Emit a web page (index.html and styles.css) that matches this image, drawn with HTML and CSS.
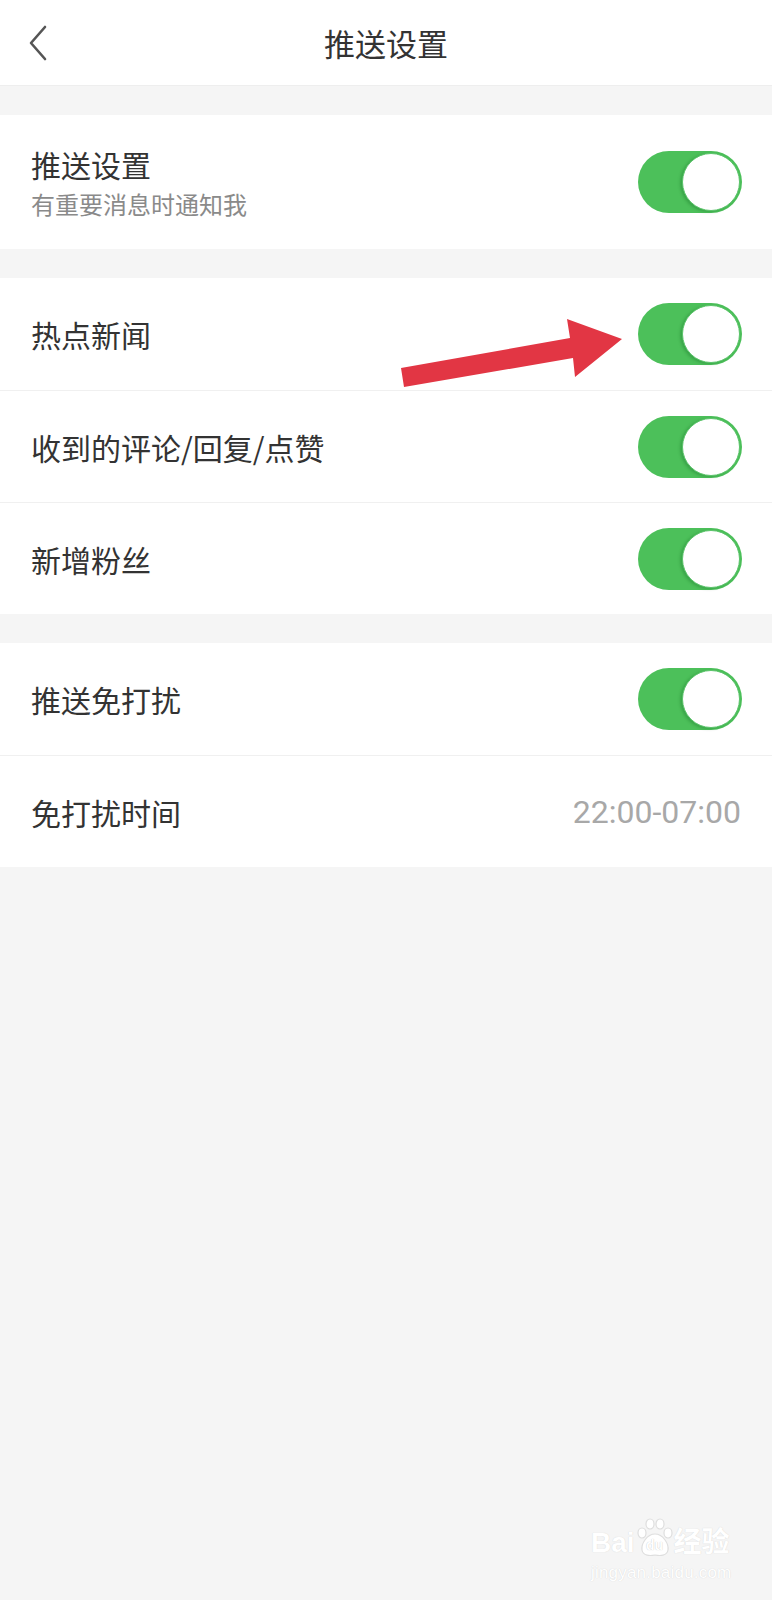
FILE: index.html
```html
<!DOCTYPE html>
<html>

<head>
    <meta name="viewport" content="width=device-width">
    <meta charset="utf-8">
    <title>推送设置</title>
    <link rel="stylesheet" href="styles.css">
</head>

<body>
    <div class="header">
        <svg class="back" width="22" height="36" viewBox="0 0 22 36">
            <path d="M18 2 L4 18 L18 34" fill="none" stroke="#555" stroke-width="2.6" stroke-linecap="round" stroke-linejoin="round"/>
        </svg>
        <h1>推送设置</h1>
    </div>

    <div class="section">
        <div class="row row-tall">
            <div class="label">
                <div class="title">推送设置</div>
                <div class="sub">有重要消息时通知我</div>
            </div>
            <div class="toggle"><span class="knob"></span></div>
        </div>
    </div>

    <div class="section">
        <div class="row">
            <div class="title">热点新闻</div>
            <div class="toggle"><span class="knob"></span></div>
        </div>
        <div class="row">
            <div class="title">收到的评论/回复/点赞</div>
            <div class="toggle"><span class="knob"></span></div>
        </div>
        <div class="row">
            <div class="title">新增粉丝</div>
            <div class="toggle"><span class="knob"></span></div>
        </div>
    </div>

    <div class="section">
        <div class="row">
            <div class="title">推送免打扰</div>
            <div class="toggle"><span class="knob"></span></div>
        </div>
        <div class="row">
            <div class="title">免打扰时间</div>
            <div class="value">22:00-07:00</div>
        </div>
    </div>

    <!-- red annotation arrow drawn over the screenshot -->
    <svg class="arrow" width="772" height="420" viewBox="0 0 772 420">
        <polygon points="401,368 570,338 567,319 622,339 575,377 573,358 404,387" fill="#e23644"/>
    </svg>

    <div class="watermark">
        <div class="wm-logo">
            <span>Bai</span>
            <span class="paw">
                <svg width="38" height="40" viewBox="0 0 38 40">
                    <g fill="#fff" stroke="#dedede" stroke-width="1.2">
                        <ellipse cx="6" cy="15" rx="4" ry="5"/>
                        <ellipse cx="14" cy="6" rx="4" ry="5"/>
                        <ellipse cx="24" cy="6" rx="4" ry="5"/>
                        <ellipse cx="32" cy="15" rx="4" ry="5"/>
                        <path d="M19 16 C11 16 5 26 6 32 C7 38 14 38 19 37 C24 38 31 38 32 32 C33 26 27 16 19 16 Z"/>
                    </g>
                </svg>
                <span class="paw-text">du</span>
            </span>
            <span>经验</span>
        </div>
        <div class="wm-url">jingyan.baidu.com</div>
    </div>
</body>

</html>
```

FILE: styles.css
```css
body {
    margin: 0;
    padding: 0;
    width: 772px;
    min-height: 1600px;
    background-color: #f5f5f5;
    font-family: "Noto Sans CJK SC", "Noto Sans", sans-serif;
    color: #333;
    position: relative;
}

.header {
    height: 86px;
    background-color: #fff;
    border-bottom: 1px solid #eee;
    box-sizing: border-box;
    display: flex;
    align-items: center;
    justify-content: center;
    position: relative;
}

.back {
    position: absolute;
    left: 27px;
    top: 25px;
}

h1 {
    margin: 0;
    font-size: 31px;
    font-weight: normal;
    color: #333;
    line-height: 40px;
}

.section {
    margin-top: 29px;
    background-color: #fff;
}

.row {
    height: 112px;
    box-sizing: border-box;
    padding: 0 30px 0 31px;
    display: flex;
    align-items: center;
    justify-content: space-between;
    border-top: 1px solid #f0f0f0;
}

.row:first-child {
    border-top: none;
}

.row-tall {
    height: 134px;
}

.label {
    display: flex;
    flex-direction: column;
}

.title {
    font-size: 30px;
    line-height: 36px;
    color: #333;
}

.sub {
    margin-top: 7px;
    font-size: 24px;
    line-height: 30px;
    color: #8a8a8a;
}

.value {
    font-family: Roboto, "Noto Sans", sans-serif;
    font-size: 32px;
    color: #a8a8a8;
    margin-right: 1px;
}

.toggle {
    width: 104px;
    height: 62px;
    border-radius: 31px;
    background-color: #4cc05a;
    box-sizing: border-box;
    padding: 2px;
    display: flex;
    justify-content: flex-end;
    align-items: center;
}

.knob {
    width: 58px;
    height: 58px;
    border-radius: 50%;
    background-color: #fff;
    box-sizing: border-box;
    border: 1.5px solid #5bc46a;
    box-shadow: -2px 1px 3px rgba(0, 80, 20, 0.25);
}

.arrow {
    position: absolute;
    left: 0;
    top: 0;
    pointer-events: none;
}

.watermark {
    position: absolute;
    left: 591px;
    top: 1516px;
    color: #fff;
    text-shadow: 0 0 1px #cfcfcf;
    font-family: "Liberation Sans", "Noto Sans CJK SC", sans-serif;
}

.wm-logo {
    font-size: 28px;
    font-weight: bold;
    line-height: 30px;
    display: flex;
    align-items: flex-end;
    height: 42px;
}

.paw {
    position: relative;
    width: 38px;
    height: 40px;
    margin: 0 0 0 1px;
}

.paw svg {
    position: absolute;
    left: 0;
    top: 0;
}

.paw-text {
    position: absolute;
    left: 0;
    right: 0;
    top: 19px;
    text-align: center;
    font-size: 14px;
    line-height: 16px;
    color: #fff;
    text-shadow: 0 0 1px #bbb;
}

.wm-url {
    font-size: 17px;
    line-height: 20px;
    margin-top: 5px;
    letter-spacing: 0.2px;
}
```
